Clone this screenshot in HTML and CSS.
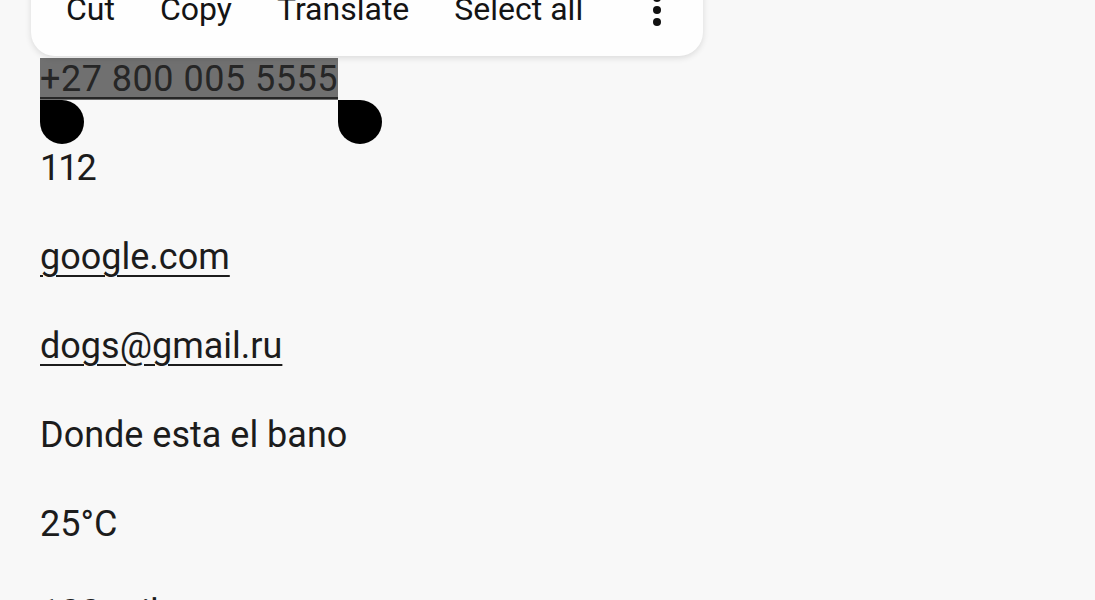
FILE: index.html
```html
<!DOCTYPE html>
<html lang="en">
<head>
    <meta charset="UTF-8">
    <meta name="viewport" content="width=device-width, initial-scale=1.0">
    <title>Smart text selection</title>
    <link rel="stylesheet" href="styles.css">
</head>
<body>
    <div class="toolbar">
        <span class="tool">Cut</span>
        <span class="tool">Copy</span>
        <span class="tool">Translate</span>
        <span class="tool">Select all</span>
        <span class="more"><i></i><i></i><i></i></span>
    </div>

    <div class="sample">
        <p class="line selected-line">
            <a class="link selection" href="#">+27 800 005 5555</a>
            <span class="handle handle-start"></span>
            <span class="handle handle-end"></span>
        </p>
        <p class="line narrow">112</p>
        <p class="line"><a class="link" href="#">google.com</a></p>
        <p class="line"><a class="link" href="#">dogs@gmail.ru</a></p>
        <p class="line">Donde esta el bano</p>
        <p class="line">25°C</p>
        <p class="line">100 miles</p>
    </div>
</body>
</html>
```

FILE: styles.css
```css
html, body {
    margin: 0;
    height: 100%;
}
body {
    font-family: Roboto, 'Noto Sans', sans-serif;
    background-color: #f8f8f8;
    color: #1c1c1c;
    position: relative;
    overflow: hidden;
}
.sample {
    padding: 58px 0 0 40px;
}
.line {
    margin: 0 0 47px;
    font-size: 36px;
    line-height: 42px;
    white-space: nowrap;
}
.narrow {
    letter-spacing: -2px;
}
.selected-line {
    position: relative;
    display: inline-block;
}
.link {
    color: inherit;
    text-decoration: underline;
    text-decoration-thickness: 2px;
    text-underline-offset: 6px;
}
.selection {
    background-color: #707070;
    color: #262626;
    letter-spacing: 0.5px;
}
/* selection drag handles sit below the highlight */
.handle {
    position: absolute;
    top: 42px;
    width: 44px;
    height: 44px;
    background: #000;
    border-radius: 0 50% 50% 50%;
}
.handle-start {
    left: 0;
}
.handle-end {
    right: -44px;
}
/* floating text actions menu, partly scrolled off the top */
.toolbar {
    position: absolute;
    left: 31px;
    top: -30px;
    width: 672px;
    height: 86px;
    box-sizing: border-box;
    padding: 0 0 0 35px;
    display: flex;
    align-items: flex-start;
    gap: 45px;
    background: #fefefe;
    border-radius: 24px;
    box-shadow: 0 2px 6px rgba(0, 0, 0, 0.12);
    z-index: 2;
}
.tool {
    font-size: 32px;
    line-height: 1;
    padding-top: 23px;
    color: #141414;
}
.more {
    margin-left: auto;
    margin-right: 42px;
    display: flex;
    flex-direction: column;
    gap: 4px;
    padding-top: 24px;
}
.more i {
    display: block;
    width: 8px;
    height: 8px;
    border-radius: 50%;
    background: #111;
}
```
